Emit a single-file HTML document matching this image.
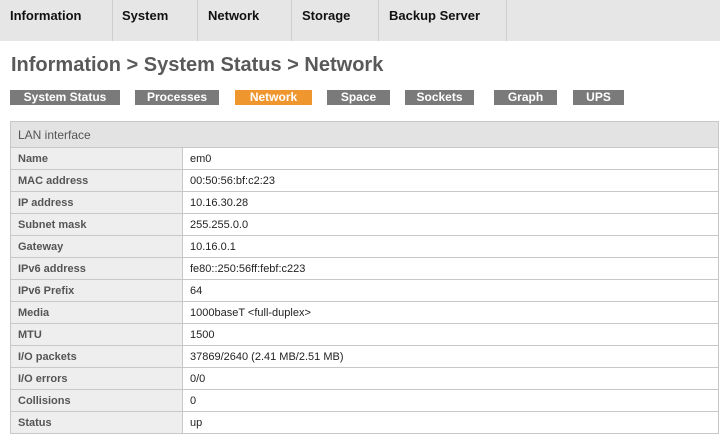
<!DOCTYPE html>
<html><head><style>
body{margin:0;width:720px;height:435px;overflow:hidden;background:#fff;font-family:"Liberation Sans","DejaVu Sans",sans-serif;}
.nav{position:absolute;left:0;top:0;width:720px;height:41px;background:#e6e6e6;}
.nav div{position:absolute;top:0;height:41px;font-weight:bold;font-size:13px;color:#111;line-height:31px;box-sizing:border-box;padding-left:10px;}
.sep{position:absolute;top:0;width:1px;height:41px;background:#cfcfcf;}
h1{position:absolute;left:11px;top:54px;margin:0;font-size:20px;color:#595959;font-weight:bold;}
.b{position:absolute;top:90px;height:15px;background:#7a7a7a;color:#fff;font-size:12px;font-weight:bold;text-align:center;line-height:15px;}
.b.on{background:#f0962e;}
table{position:absolute;left:10px;top:121px;width:709px;border-collapse:collapse;font-size:11px;}
tr{height:22px;}
td{border:1px solid #c8c8c8;padding:0 0 0 7px;box-sizing:border-box;}
td.l{width:172px;background:#eeeeee;color:#555;font-weight:bold;}
td.v{color:#222;}
tr.h{height:26px;}
th{background:#e3e3e3;border:1px solid #c8c8c8;text-align:left;padding-left:7px;font-size:12px;color:#555;font-weight:normal;}
</style></head><body>
<div class="nav">
<div style="left:0">Information</div>
<div style="left:112px">System</div>
<div style="left:198px">Network</div>
<div style="left:292px">Storage</div>
<div style="left:379px">Backup Server</div>
<span class="sep" style="left:112px"></span>
<span class="sep" style="left:197px"></span>
<span class="sep" style="left:291px"></span>
<span class="sep" style="left:378px"></span>
<span class="sep" style="left:506px"></span>
</div>
<h1>Information &gt; System Status &gt; Network</h1>
<div class="b" style="left:10px;width:110px">System Status</div>
<div class="b" style="left:135px;width:84px">Processes</div>
<div class="b on" style="left:235px;width:77px">Network</div>
<div class="b" style="left:327px;width:63px">Space</div>
<div class="b" style="left:405px;width:69px">Sockets</div>
<div class="b" style="left:494px;width:63px">Graph</div>
<div class="b" style="left:573px;width:51px">UPS</div>
<table>
<tr class="h"><th colspan="2">LAN interface</th></tr>
<tr><td class="l">Name</td><td class="v">em0</td></tr>
<tr><td class="l">MAC address</td><td class="v">00:50:56:bf:c2:23</td></tr>
<tr><td class="l">IP address</td><td class="v">10.16.30.28</td></tr>
<tr><td class="l">Subnet mask</td><td class="v">255.255.0.0</td></tr>
<tr><td class="l">Gateway</td><td class="v">10.16.0.1</td></tr>
<tr><td class="l">IPv6 address</td><td class="v">fe80::250:56ff:febf:c223</td></tr>
<tr><td class="l">IPv6 Prefix</td><td class="v">64</td></tr>
<tr><td class="l">Media</td><td class="v">1000baseT &lt;full-duplex&gt;</td></tr>
<tr><td class="l">MTU</td><td class="v">1500</td></tr>
<tr><td class="l">I/O packets</td><td class="v">37869/2640 (2.41 MB/2.51 MB)</td></tr>
<tr><td class="l">I/O errors</td><td class="v">0/0</td></tr>
<tr><td class="l">Collisions</td><td class="v">0</td></tr>
<tr><td class="l">Status</td><td class="v">up</td></tr>
</table>
</body></html>
